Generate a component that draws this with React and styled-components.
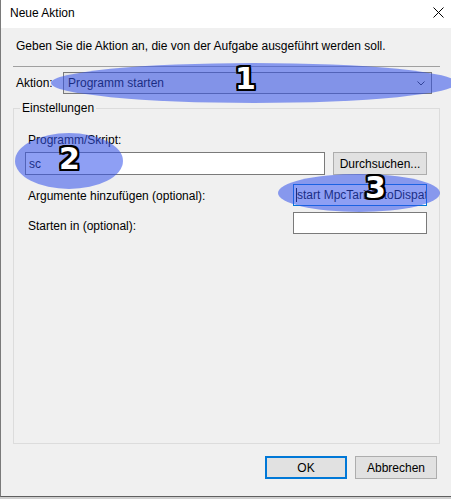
import React from 'react';
import styled, { createGlobalStyle } from 'styled-components';

const GlobalStyle = createGlobalStyle`
  html, body {
    margin: 0;
    padding: 0;
    background: #cfcfcf;
  }
  body {
    font-family: "Liberation Sans", Arial, sans-serif;
    font-size: 12px;
    color: #000;
  }
`;

const Window = styled.div`
  position: relative;
  width: 451px;
  height: 497px;
  box-sizing: border-box;
  display: flex;
  flex-direction: column;
  background: #f0f0f0;
  border-left: 1px solid #7a7a7a;
  border-bottom: 1px solid #5f5f5f;
  overflow: hidden;
`;

const TitleBar = styled.div`
  height: 28px;
  flex: none;
  display: flex;
  align-items: center;
  justify-content: space-between;
  background: #fff;
  padding-left: 9px;
`;

const Title = styled.span`
  line-height: 16px;
  margin-top: -2px;
`;

const CloseButton = styled.div`
  width: 26px;
  height: 28px;
  display: flex;
  align-items: center;
  justify-content: center;
  padding-bottom: 4px;
  box-sizing: border-box;
`;

const Body = styled.div`
  flex: 1;
  min-height: 0;
  display: flex;
  flex-direction: column;
  padding: 10px 11px 0 12px;
`;

const Intro = styled.div`
  line-height: 16px;
  margin-left: 3px;
`;

const Separator = styled.div`
  margin-top: 12px;
  height: 0;
  border-top: 1px solid #a0a0a0;
`;

const ActionRow = styled.div`
  margin-top: 5px;
  display: flex;
  align-items: center;
  height: 22px;
`;

const ActionLabel = styled.span`
  width: 50px;
  padding-left: 3px;
  box-sizing: border-box;
`;

const Combo = styled.div`
  width: 369px;
  height: 22px;
  box-sizing: border-box;
  display: flex;
  align-items: center;
  justify-content: space-between;
  padding: 0 6px 0 4px;
  background: #e5e5e5;
  border: 1px solid #7a7a7a;
`;

const Group = styled.fieldset`
  flex: 1;
  min-height: 0;
  margin: 6px 0 0 0;
  padding: 16px 12px 0 11px;
  border: 1px solid #dcdcdc;
  display: flex;
  flex-direction: column;
`;

const Legend = styled.legend`
  padding: 0 2px;
  margin-left: -5px;
  line-height: 16px;
`;

const Label = styled.div`
  line-height: 16px;
  padding-left: 3px;
  padding-top: ${p => p.$shift || 0}px;
`;

const Row = styled.div`
  display: flex;
  align-items: center;
  justify-content: space-between;
  margin-top: ${p => p.$gap}px;
`;

const Field = styled.div`
  position: relative;
  width: ${p => p.$width}px;
  height: ${p => p.$height}px;
  box-sizing: border-box;
  display: flex;
  align-items: center;
  padding-left: 3px;
  overflow: hidden;
  white-space: nowrap;
  background: #fff;
  border: 1px solid ${p => (p.$focused ? '#0078d7' : '#7a7a7a')};
`;

const Caret = styled.span`
  position: absolute;
  left: 2px;
  top: 3px;
  bottom: 3px;
  width: 1px;
  background: #000;
`;

const Button = styled.div`
  width: ${p => p.$width}px;
  height: 23px;
  box-sizing: border-box;
  display: flex;
  align-items: center;
  justify-content: center;
  background: #e1e1e1;
  border: ${p => (p.$default ? '2px solid #0078d7' : '1px solid #adadad')};
`;

const Footer = styled.div`
  display: flex;
  justify-content: flex-end;
  gap: 8px;
  margin: 12px 3px 17px 0;
`;

const Marker = styled.div`
  position: absolute;
  left: ${p => p.$x}px;
  top: ${p => p.$y}px;
  width: ${p => p.$w}px;
  height: ${p => p.$h}px;
  border-radius: 50%;
  background: rgba(50, 80, 235, 0.55);
  pointer-events: none;
`;

const Badge = styled.div`
  position: absolute;
  left: ${p => p.$x}px;
  top: ${p => p.$y}px;
  font-family: "DejaVu Sans", sans-serif;
  font-weight: bold;
  font-size: 30px;
  line-height: 30px;
  color: #fff;
  text-shadow:
    2px 0 0 #000, -2px 0 0 #000, 0 2px 0 #000, 0 -2px 0 #000,
    2px 2px 0 #000, -2px -2px 0 #000, 2px -2px 0 #000, -2px 2px 0 #000,
    1px 2px 0 #000, 2px 1px 0 #000, -1px -2px 0 #000, -2px -1px 0 #000;
  pointer-events: none;
`;

const marks = [
  { n: '1', x: 50, y: 63, w: 406, h: 40, bx: 234, by: 64 },
  { n: '2', x: 14, y: 133, w: 108, h: 56, bx: 58, by: 144 },
  { n: '3', x: 277, y: 174, w: 162, h: 38, bx: 364, by: 173 },
];

export default function App() {
  return (
    <>
      <GlobalStyle />
      <Window>
        <TitleBar>
          <Title>Neue Aktion</Title>
          <CloseButton>
            <svg width="11" height="11" viewBox="0 0 11 11">
              <path d="M0.5 0.5 L10.5 10.5 M10.5 0.5 L0.5 10.5" stroke="#000" strokeWidth="1" fill="none" />
            </svg>
          </CloseButton>
        </TitleBar>
        <Body>
          <Intro>Geben Sie die Aktion an, die von der Aufgabe ausgeführt werden soll.</Intro>
          <Separator />
          <ActionRow>
            <ActionLabel>Aktion:</ActionLabel>
            <Combo>
              <span>Programm starten</span>
              <svg width="8" height="5" viewBox="0 0 8 5">
                <path d="M0.5 0.5 L4 4 L7.5 0.5" stroke="#333" strokeWidth="1" fill="none" />
              </svg>
            </Combo>
          </ActionRow>
          <Group>
            <Legend>Einstellungen</Legend>
            <Label>Programm/Skript:</Label>
            <Row $gap={4}>
              <Field $width={300} $height={23}>sc</Field>
              <Button $width={94}>Durchsuchen...</Button>
            </Row>
            <Row $gap={9}>
              <Label $shift={2}>Argumente hinzufügen (optional):</Label>
              <Field $width={134} $height={22} $focused>
                start MpcTarifAutoDispatcher
                <Caret />
              </Field>
            </Row>
            <Row $gap={6}>
              <Label $shift={5}>Starten in (optional):</Label>
              <Field $width={134} $height={22} />
            </Row>
          </Group>
          <Footer>
            <Button $width={82} $default>OK</Button>
            <Button $width={82}>Abbrechen</Button>
          </Footer>
        </Body>
        {marks.map(m => (
          <React.Fragment key={m.n}>
            <Marker $x={m.x} $y={m.y} $w={m.w} $h={m.h} />
            <Badge $x={m.bx} $y={m.by}>{m.n}</Badge>
          </React.Fragment>
        ))}
      </Window>
    </>
  );
}
